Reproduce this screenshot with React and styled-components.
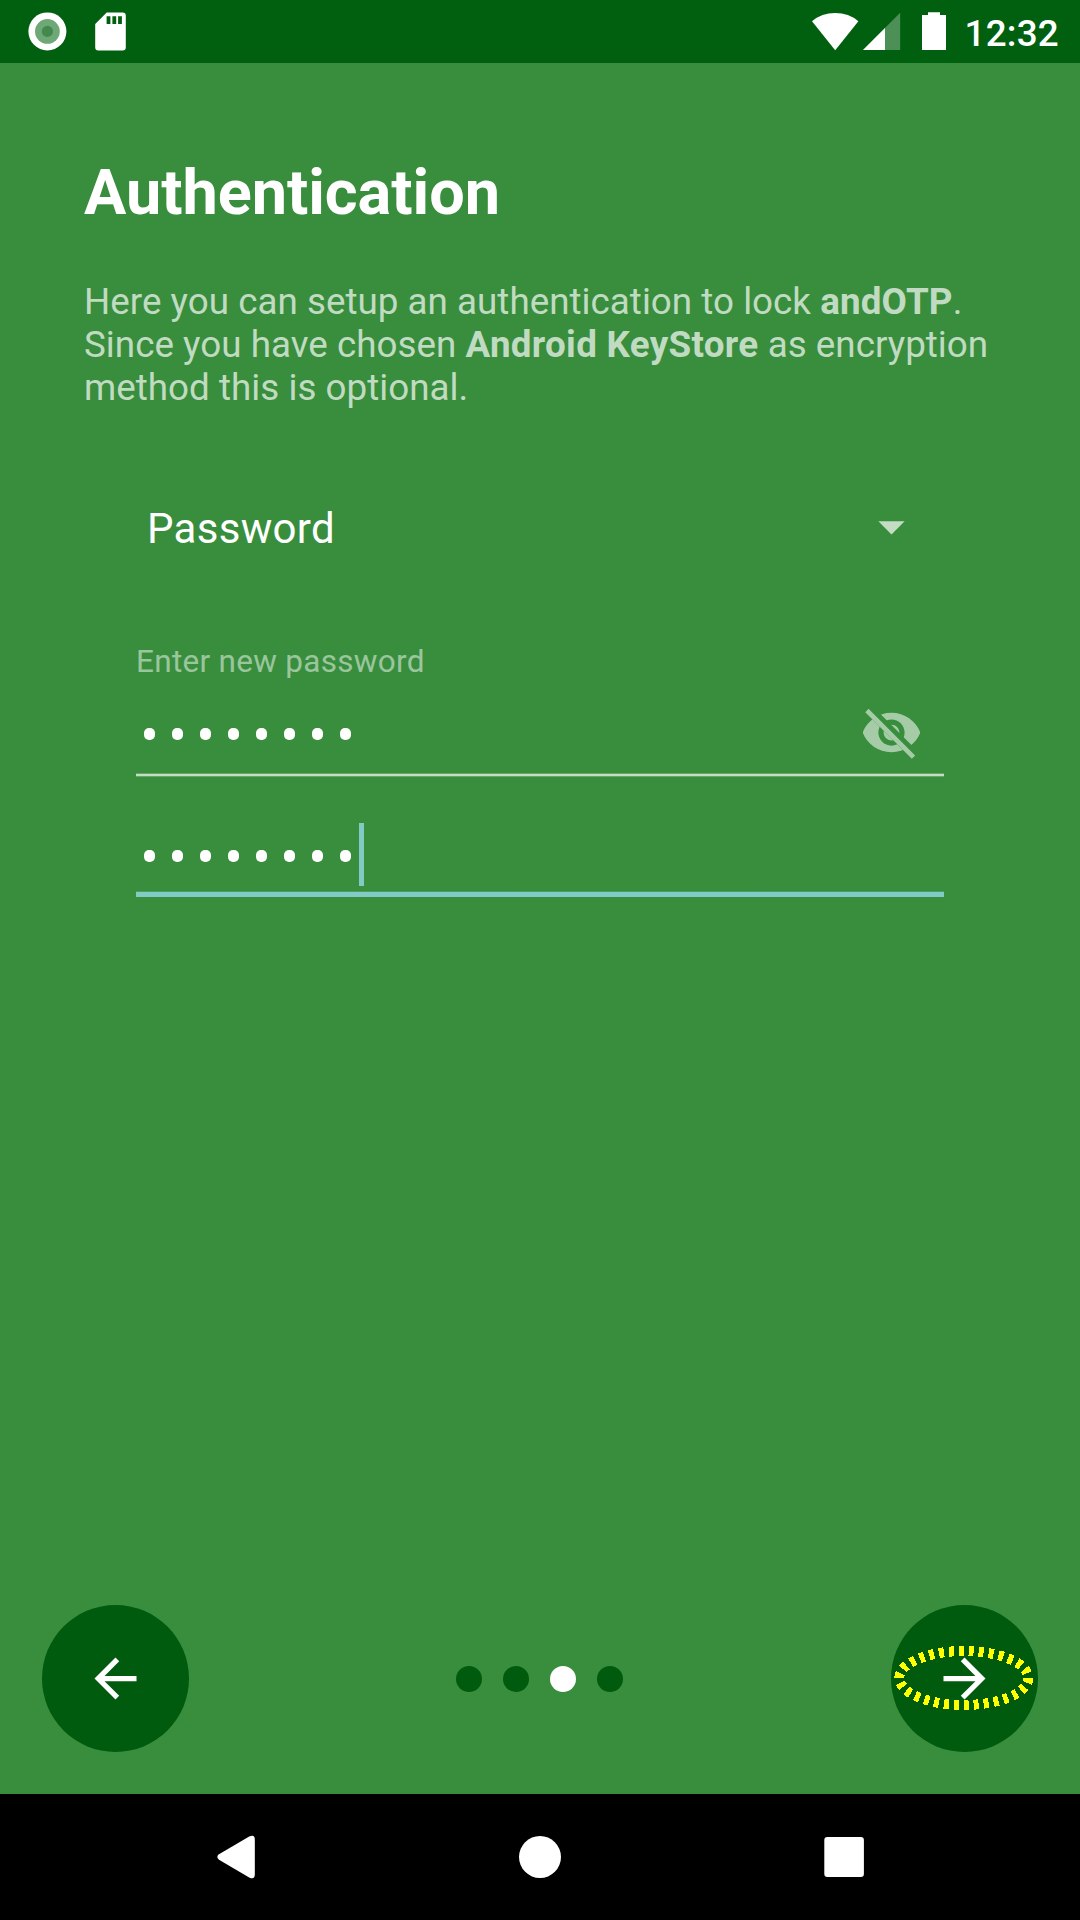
import React from "react";
import styled, { createGlobalStyle } from "styled-components";

const GlobalStyle = createGlobalStyle`
  *, *::before, *::after { box-sizing: border-box; }
  body { margin: 0; background: #388e3c; }
  svg { display: block; flex: none; }
`;

const Screen = styled.div`
  width: 1080px;
  height: 1920px;
  display: flex;
  flex-direction: column;
  background: #388e3c;
  color: #fff;
  font-family: Roboto, "Noto Sans", sans-serif;
  overflow: hidden;
`;

const StatusBar = styled.header`
  height: 63px;
  flex: none;
  display: flex;
  justify-content: space-between;
  padding: 0 21px 0 28px;
  background: #00600f;
`;

const StatusGroup = styled.div`
  display: flex;
  align-items: flex-start;
`;

const Clock = styled.time`
  margin-left: 17.75px;
  padding-top: 12px;
  font-size: 36.75px;
  line-height: 43px;
  font-weight: 500;
  letter-spacing: 0.25px;
`;

const Page = styled.main`
  flex: 1;
  display: flex;
  flex-direction: column;
  padding: 93px 42px 42px;
`;

const Intro = styled.section`
  padding: 0 42px;
`;

const Title = styled.h1`
  margin: 0;
  font-size: 63px;
  line-height: 74px;
  font-weight: 700;
  letter-spacing: -0.05px;
`;

const Description = styled.p`
  margin: 50px 0 0;
  font-size: 36.75px;
  line-height: 43px;
  letter-spacing: 0.03px;
  color: rgba(255, 255, 255, 0.7);
  white-space: nowrap;
`;

const Strong = styled.b`
  font-weight: 700;
  letter-spacing: ${(p) => p.$tracking}px;
`;

const Form = styled.section`
  display: flex;
  flex-direction: column;
  width: 808px;
  margin: 86px 0 0 94px;
`;

const Spinner = styled.div`
  height: 63px;
  display: flex;
  align-items: center;
  justify-content: space-between;
  padding: 0 21px 0 11px;
`;

const SpinnerValue = styled.span`
  padding-top: 4px;
  font-size: 42px;
  line-height: 49px;
  letter-spacing: 0.3px;
`;

const Label = styled.label`
  margin-top: 85px;
  font-size: 31.5px;
  line-height: 37px;
  letter-spacing: 0.29px;
  color: rgba(255, 255, 255, 0.5);
`;

const Field = styled.div`
  display: flex;
  justify-content: space-between;
  height: ${(p) => p.$height}px;
  padding: ${(p) => p.$top}px 21px 0 8px;
`;

const Mask = styled.div`
  display: flex;
  gap: 17px;
  padding-top: 27px;
`;

const Bullet = styled.span`
  width: 11px;
  height: 12px;
  border-radius: 5px;
  background: #fff;
`;

const MaskWithCaret = styled.div`
  display: flex;
  gap: 8px;
`;

const Caret = styled.span`
  width: 5px;
  height: 63px;
  background: #80cbc4;
`;

const Underline = styled.div`
  height: 4px;
  background: linear-gradient(
    rgba(255, 255, 255, 0.22) 0 1px,
    rgba(255, 255, 255, 0.7) 1px 3px,
    rgba(255, 255, 255, 0.22) 3px
  );
`;

const ActiveUnderline = styled.div`
  height: 6px;
  background: linear-gradient(rgba(128, 203, 196, 0.25) 0 1px, #80cbc4 1px);
`;

const Footer = styled.footer`
  margin-top: auto;
  display: flex;
  align-items: center;
  justify-content: space-between;
`;

const RoundButton = styled.button`
  position: relative;
  width: 147px;
  height: 147px;
  display: flex;
  align-items: center;
  justify-content: center;
  padding: 0;
  border: 0;
  border-radius: 50%;
  background: #005b0e;
  color: #fff;
`;

const Highlight = styled.svg`
  position: absolute;
  left: 0;
  top: 38px;
`;

const Pager = styled.div`
  display: flex;
  gap: 21px;
  margin-right: 1px;
`;

const PageDot = styled.span`
  width: 26px;
  height: 26px;
  border-radius: 50%;
  background: ${(p) => (p.$active ? "#fff" : "#005b0e")};
`;

const NavBar = styled.nav`
  height: 126px;
  flex: none;
  display: flex;
  align-items: center;
  justify-content: space-between;
  padding: 0 214px;
  background: #000;
`;

const PasswordMask = () => (
  <Mask>
    {Array.from({ length: 8 }, (_, i) => <Bullet key={i} />)}
  </Mask>
);

const RecordIcon = () => (
  <svg width="40" height="63">
    <circle cx="19.4" cy="31.4" r="19" fill="#fff" />
    <circle cx="19.4" cy="31.4" r="12.4" fill="#6fa877" />
    <circle cx="19.4" cy="31.4" r="5.6" fill="#43894d" />
  </svg>
);

const SdCardIcon = () => (
  <svg width="60" height="63">
    <path
      fill="#fff"
      fillRule="evenodd"
      d="M38.7 12.4H54.6Q57.8 12.4 57.8 15.6V47.2Q57.8 50.4 54.6 50.4H30.4Q27.2 50.4 27.2 47.2V24ZM38.6 16.3V24H42.4V16.3ZM44.4 16.3V24H48.2V16.3ZM50.1 16.3V24H53.9V16.3Z"
    />
  </svg>
);

const WifiIcon = () => (
  <svg width="48" height="63">
    <path d="M0 21.2Q9.6 13 23.2 13T46.4 21.2L23.2 50.2Z" fill="#fff" />
  </svg>
);

const SignalIcon = () => (
  <svg width="41" height="63">
    <path d="M40.2 12.8V50H3Z" fill="#fff" fillOpacity=".3" />
    <path d="M25 28V50H3Z" fill="#fff" />
  </svg>
);

const BatteryIcon = () => (
  <svg width="46" height="63">
    <path d="M27 12.2H39V15H45V50H21V15H27Z" fill="#fff" />
  </svg>
);

const DropdownIcon = () => (
  <svg width="63" height="63" viewBox="0 0 24 24">
    <path d="M7 10l5 5 5-5z" fill="#fff" fillOpacity=".7" />
  </svg>
);

const HiddenEyeIcon = () => (
  <svg width="63" height="63" viewBox="0 0 24 24" opacity=".55">
    <clipPath id="strike-gap">
      <path d="M2 4.27 19.73 22 22.27 19.46 4.54 1.73V1H23V23H1V4.27Z" />
    </clipPath>
    <path
      clipPath="url(#strike-gap)"
      fill="#fff"
      d="M12 4.5C7 4.5 2.73 7.61 1 12c1.73 4.39 6 7.5 11 7.5s9.27-3.11 11-7.5c-1.73-4.39-6-7.5-11-7.5zM12 17c-2.76 0-5-2.24-5-5s2.24-5 5-5 5 2.24 5 5-2.24 5-5 5zM12 9c-1.66 0-3 1.34-3 3s1.34 3 3 3 3-1.34 3-3-1.34-3-3-3z"
    />
    <path d="M3.27 4.27 19.74 20.74" stroke="#fff" strokeWidth="1.8" strokeLinecap="square" />
  </svg>
);

const BackArrow = () => (
  <svg width="63" height="63" viewBox="0 0 24 24">
    <path fill="#fff" d="M20 11H7.83l5.59-5.59L12 4l-8 8 8 8 1.41-1.41L7.83 13H20v-2z" />
  </svg>
);

const ForwardArrow = () => (
  <svg width="63" height="63" viewBox="0 0 24 24">
    <path fill="#fff" d="M12 4l-1.41 1.41L16.17 11H4v2h12.17l-5.58 5.59L12 20l8-8z" />
  </svg>
);

export default function App() {
  return (
    <Screen>
      <GlobalStyle />
      <StatusBar>
        <StatusGroup>
          <RecordIcon />
          <SdCardIcon />
        </StatusGroup>
        <StatusGroup>
          <WifiIcon />
          <SignalIcon />
          <BatteryIcon />
          <Clock>12:32</Clock>
        </StatusGroup>
      </StatusBar>

      <Page>
        <Intro>
          <Title>Authentication</Title>
          <Description>
            Here you can setup an authentication to lock <Strong $tracking={0.15}>andOTP</Strong>.<br />
            Since you have chosen <Strong $tracking={0.32}>Android KeyStore</Strong> as encryption<br />
            method this is optional.
          </Description>
        </Intro>

        <Form>
          <Spinner>
            <SpinnerValue>Password</SpinnerValue>
            <DropdownIcon />
          </Spinner>
          <Label>Enter new password</Label>
          <Field $height={93} $top={21}>
            <PasswordMask />
            <HiddenEyeIcon />
          </Field>
          <Underline />
          <Field $height={114} $top={46}>
            <MaskWithCaret>
              <PasswordMask />
              <Caret />
            </MaskWithCaret>
          </Field>
          <ActiveUnderline />
        </Form>

        <Footer>
          <RoundButton aria-label="Back">
            <BackArrow />
          </RoundButton>
          <Pager>
            <PageDot />
            <PageDot />
            <PageDot $active />
            <PageDot />
          </Pager>
          <RoundButton aria-label="Next">
            <ForwardArrow />
            <Highlight width="147" height="70" shapeRendering="crispEdges">
              <ellipse
                cx="72.8"
                cy="35"
                rx="64.5"
                ry="27"
                fill="none"
                stroke="#ff0"
                strokeWidth="10"
                pathLength="300"
                strokeDasharray="5 5"
              />
            </Highlight>
          </RoundButton>
        </Footer>
      </Page>

      <NavBar>
        <svg width="44" height="44">
          <path
            fill="#fff"
            d="M5 19.3 35.2 1.6Q40.8-1 40.8 4.4V39.6Q40.8 45 35.2 42.4L5 24.7Q1.6 22 5 19.3Z"
          />
        </svg>
        <svg width="44" height="44">
          <circle cx="22" cy="22" r="21" fill="#fff" />
        </svg>
        <svg width="44" height="44">
          <rect x="2.3" y="2" width="39.6" height="40" rx="3" fill="#fff" />
        </svg>
      </NavBar>
    </Screen>
  );
}
